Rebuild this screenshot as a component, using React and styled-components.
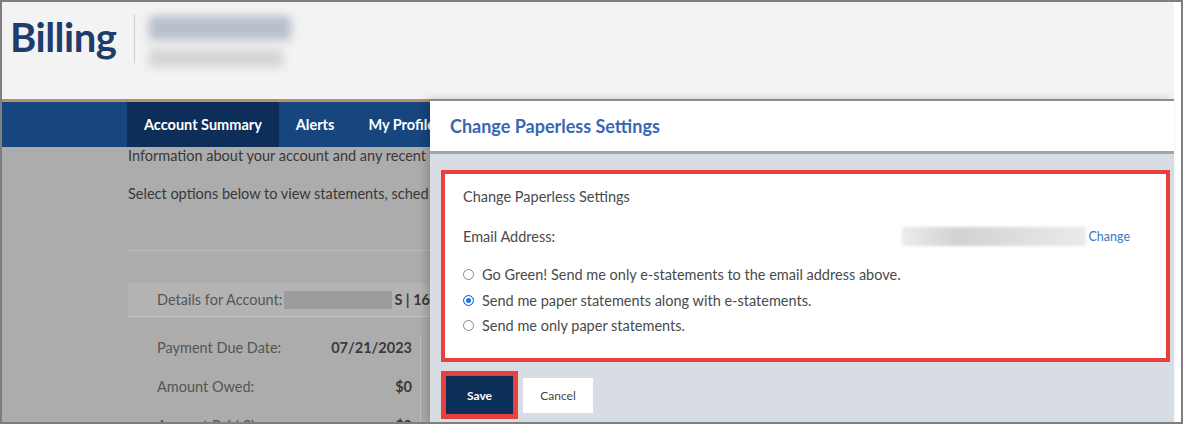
import React from 'react'
import styled, { createGlobalStyle } from 'styled-components'

const GlobalStyle = createGlobalStyle`
  body {
    margin: 0;
    font-family: Lato, "Liberation Sans", sans-serif;
    background: #fff;
  }
`

const Frame = styled.div`
  width: 1183px;
  height: 424px;
  box-sizing: border-box;
  border: 2px solid #7f7f7f;
  padding-right: 7px;
  background: #fff;
  display: flex;
  flex-direction: column;
  overflow: hidden;
`

const Header = styled.header`
  height: 97px;
  flex-shrink: 0;
  background: #f3f3f3;
  display: flex;
  align-items: flex-start;
  padding-left: 8px;
`

const Title = styled.h1`
  margin: 15px 0 0;
  font-size: 40px;
  line-height: 40px;
  font-weight: 700;
  letter-spacing: -0.5px;
  color: #1e3d6d;
`

const Divider = styled.div`
  width: 1px;
  height: 49px;
  margin: 12px 0 0 18px;
  background: #cfcfcf;
`

const Redacted = styled.div`
  margin: 10px 0 0 14px;
  width: 147px;
  height: 60px;
  display: flex;
  flex-direction: column;
  gap: 9px;
  padding-top: 4px;
  box-sizing: border-box;
`

const BlurBar = styled.div`
  height: ${p => p.$h}px;
  width: ${p => p.$w}px;
  background: ${p => p.$c};
  filter: blur(5px);
`

const Body = styled.div`
  flex: 1;
  display: flex;
  min-height: 0;
`

const Page = styled.div`
  width: 428px;
  flex-shrink: 0;
  background: #acacac;
  display: flex;
  flex-direction: column;
  overflow: hidden;
`

const Nav = styled.nav`
  border-top: 3px solid #b8916a;
  height: 45px;
  flex-shrink: 0;
  background: #17467f;
  display: flex;
  padding-left: 125px;
  overflow: hidden;
`

const NavItem = styled.div`
  padding: 0 17px;
  display: flex;
  align-items: center;
  background: ${p => (p.$active ? '#0d2e58' : 'transparent')};
  color: #fff;
  font-size: 14.5px;
  font-weight: 700;
  white-space: nowrap;
`

const PageContent = styled.div`
  padding-left: 126px;
  color: #383838;
  font-size: 14.5px;
`

const Para = styled.p`
  margin: ${p => p.$top}px 0 0;
  line-height: 17px;
  white-space: nowrap;
  overflow: hidden;
`

const Rule = styled.div`
  height: 1px;
  margin-top: 48px;
  background: #bcbcbc;
`

const DetailsBand = styled.div`
  margin-top: 32px;
  height: 33px;
  padding-left: 29px;
  background: #b3b3b3;
  border-bottom: 1px solid #c4c4c4;
  display: flex;
  align-items: center;
  white-space: nowrap;
  overflow: hidden;
  color: #555;
`

const Mask = styled.span`
  display: inline-block;
  width: 108px;
  height: 18px;
  margin: 0 2px;
  background: #9c9c9c;
`

const Strong = styled.b`
  color: #3a3a3a;
`

const Rows = styled.div`
  margin-top: 18px;
  width: 293px;
  border-right: 1px solid #bebebe;
  box-sizing: border-box;
  padding: 0 8px 0 29px;
`

const Row = styled.div`
  height: 39px;
  line-height: 26px;
  display: flex;
  justify-content: space-between;
  color: #555;
  white-space: nowrap;
`

const Modal = styled.section`
  flex: 1;
  display: flex;
  flex-direction: column;
  border-top: 2px solid #8c8c8c;
  box-shadow: -4px 0 8px rgba(0, 0, 0, 0.18);
`

const ModalHeader = styled.div`
  height: 50px;
  flex-shrink: 0;
  background: #fff;
  border-bottom: 3px solid #a3a3a3;
  display: flex;
  align-items: center;
  padding-left: 20px;
  color: #3867b3;
  font-size: 18px;
  font-weight: 700;
`

const ModalBody = styled.div`
  flex: 1;
  background: #d8dce3;
  padding: 16px 4px 0 11px;
`

const Panel = styled.div`
  height: 192px;
  box-sizing: border-box;
  border: 4px solid #e8403f;
  background: #fff;
  padding: 14px 36px 0 18px;
  color: #4a4a4a;
  font-size: 14.5px;
  line-height: 17px;
`

const EmailRow = styled.div`
  margin-top: 21px;
  height: 20px;
  display: flex;
  align-items: center;
`

const EmailBlur = styled.div`
  margin-left: auto;
  width: 184px;
  height: 19px;
  background: linear-gradient(90deg, #ececec, #d2d2d2 30%, #dcdcdc 60%, #ebebeb);
  filter: blur(1.5px);
`

const ChangeLink = styled.a`
  margin-left: 2px;
  font-size: 12.5px;
  color: #3a78c0;
`

const Options = styled.div`
  margin-top: 20px;
  display: flex;
  flex-direction: column;
  gap: 8.5px;
`

const Option = styled.label`
  display: flex;
  align-items: center;
  gap: 8px;
  white-space: nowrap;
`

const Radio = styled.span`
  width: 11px;
  height: 11px;
  box-sizing: border-box;
  border-radius: 50%;
  border: 1px solid ${p => (p.$checked ? '#1a73e8' : '#8a8a8a')};
  background: ${p => (p.$checked ? '#1a73e8' : '#fff')};
  box-shadow: ${p => (p.$checked ? 'inset 0 0 0 2px #fff' : 'none')};
`

const Actions = styled.div`
  margin-top: 9px;
  display: flex;
  align-items: center;
  gap: 5px;
`

const SaveFrame = styled.div`
  border: 5px solid #e8403f;
  display: flex;
`

const Button = styled.button`
  width: ${p => (p.$primary ? 67 : 70)}px;
  height: ${p => (p.$primary ? 38 : 35)}px;
  border: none;
  background: ${p => (p.$primary ? '#0c2f57' : '#fff')};
  color: ${p => (p.$primary ? '#fff' : '#444')};
  font-family: Lato, "Liberation Sans", sans-serif;
  font-size: 12px;
  font-weight: ${p => (p.$primary ? 700 : 400)};
  padding: 0;
`

const options = [
  'Go Green! Send me only e-statements to the email address above.',
  'Send me paper statements along with e-statements.',
  'Send me only paper statements.',
]

export default function App() {
  return (
    <>
      <GlobalStyle />
      <Frame>
        <Header>
          <Title>Billing</Title>
          <Divider />
          <Redacted>
            <BlurBar $w={142} $h={24} $c="#b6bfcb" />
            <BlurBar $w={134} $h={18} $c="#d4d4d4" />
          </Redacted>
        </Header>
        <Body>
          <Page>
            <Nav>
              <NavItem $active>Account Summary</NavItem>
              <NavItem>Alerts</NavItem>
              <NavItem>My Profile</NavItem>
            </Nav>
            <PageContent>
              <Para $top={0}>Information about your account and any recent</Para>
              <Para $top={21}>Select options below to view statements, sched</Para>
              <Rule />
              <DetailsBand>
                Details for Account:<Mask /><Strong>S | 16</Strong>
              </DetailsBand>
              <Rows>
                <Row>
                  <span>Payment Due Date:</span>
                  <Strong>07/21/2023</Strong>
                </Row>
                <Row>
                  <span>Amount Owed:</span>
                  <Strong>$0</Strong>
                </Row>
                <Row>
                  <span>Amount Paid Since:</span>
                  <Strong>$0</Strong>
                </Row>
              </Rows>
            </PageContent>
          </Page>
          <Modal>
            <ModalHeader>Change Paperless Settings</ModalHeader>
            <ModalBody>
              <Panel>
                <div>Change Paperless Settings</div>
                <EmailRow>
                  <span>Email Address:</span>
                  <EmailBlur />
                  <ChangeLink>Change</ChangeLink>
                </EmailRow>
                <Options>
                  {options.map((text, i) => (
                    <Option key={text}>
                      <Radio $checked={i === 1} />
                      {text}
                    </Option>
                  ))}
                </Options>
              </Panel>
              <Actions>
                <SaveFrame>
                  <Button $primary>Save</Button>
                </SaveFrame>
                <Button>Cancel</Button>
              </Actions>
            </ModalBody>
          </Modal>
        </Body>
      </Frame>
    </>
  )
}
